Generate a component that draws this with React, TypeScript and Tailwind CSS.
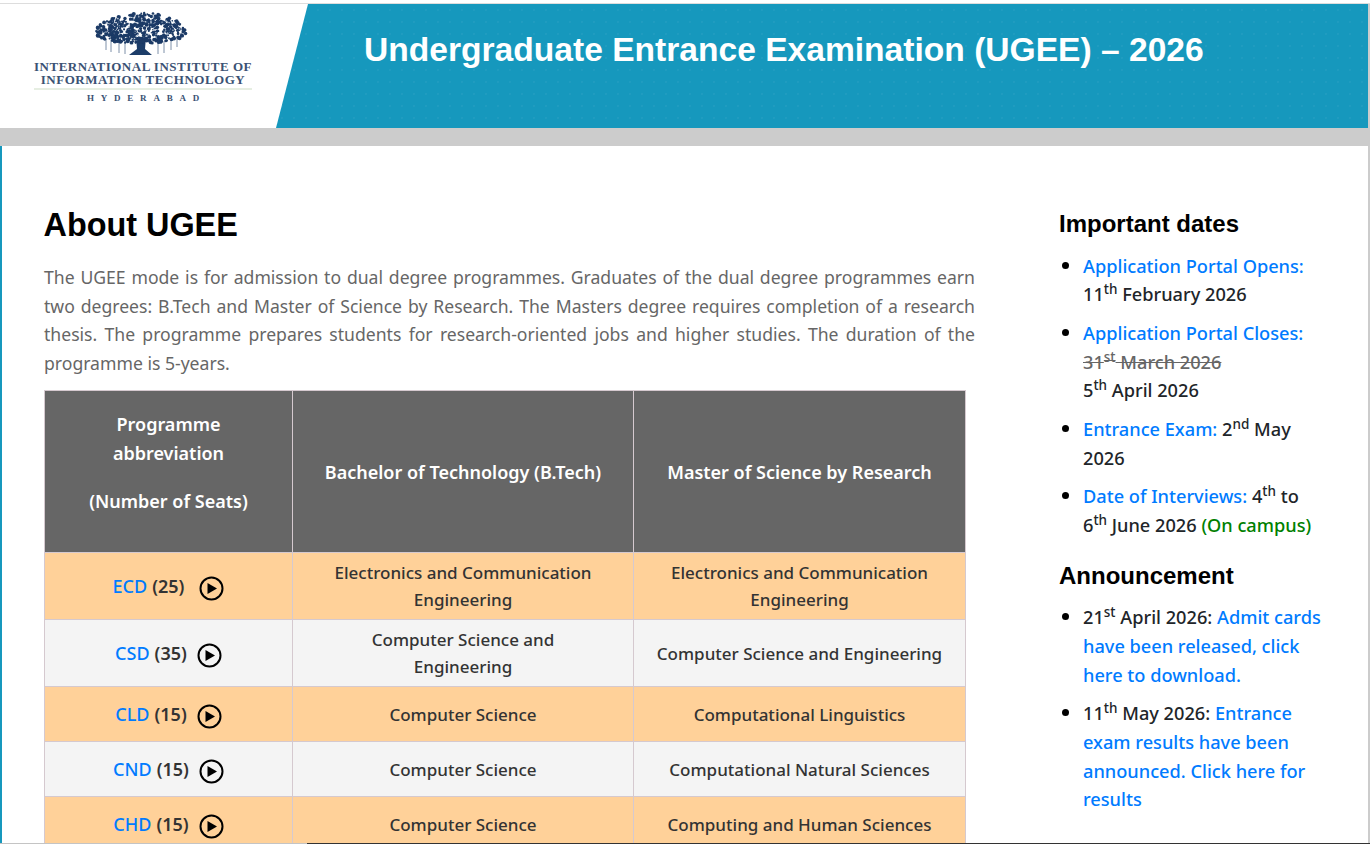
const body = "font-['Noto_Sans','Open_Sans',sans-serif]";

function Play() {
  return (
    <svg width="25" height="25" viewBox="0 0 25 25" className="block">
      <circle cx="12.5" cy="12.5" r="11" fill="none" stroke="#000" strokeWidth="2" />
      <path d="M8.500 7 L18 12.500 L8.500 18 Z" fill="#000" />
    </svg>
  );
}

function rnd(i: number) {
  const x = Math.sin(i * 12.9898) * 43758.5453;
  return x - Math.floor(x);
}

const leaves = Array.from({ length: 420 }, (_, i) => {
  const a = rnd(i + 1) * Math.PI * 2;
  const d = Math.sqrt(rnd(i + 500));
  const cx = 53 + Math.cos(a) * d * 45;
  const top = Math.sin(a) < 0 ? 17 : 14;
  const cy = 24 + Math.sin(a) * d * top + Math.abs(Math.cos(a) * d) * 3;
  return { cx, cy, r: 0.7 + rnd(i + 900) * 1.5 };
});
const specks = Array.from({ length: 60 }, (_, i) => {
  const a = rnd(i + 2000) * Math.PI * 2;
  const d = Math.sqrt(rnd(i + 2500));
  return { cx: 53 + Math.cos(a) * d * 40, cy: 24 + Math.sin(a) * d * 13, r: 0.3 + rnd(i + 2900) * 0.6 };
});

function Tree() {
  return (
    <svg width="110" height="52" viewBox="0 0 110 52" className="block">
      <defs>
        <filter id="soft" x="-5%" y="-5%" width="110%" height="110%">
          <feGaussianBlur stdDeviation="0.55" />
        </filter>
      </defs>
      <g filter="url(#soft)">
        <path d="M48 32 L58 32 L57 44 L64 50 L41 50 L49 44 Z" fill="#1d3d69" />
        <path d="M18 34 v11 M23 35 v12 M31 36 v12 M37 36 v13 M70 36 v13 M76 36 v12 M83 35 v10 M89 34 v8" stroke="#7e90a9" strokeWidth="1" fill="none" />
        {leaves.map((l, i) => (
          <circle key={i} cx={l.cx} cy={l.cy} r={l.r} fill="#1b3a66" />
        ))}
        {specks.map((l, i) => (
          <circle key={i} cx={l.cx} cy={l.cy} r={l.r} fill="#b9c5d4" />
        ))}
      </g>
    </svg>
  );
}

function Logo() {
  return (
    <div className="w-[276px] shrink-0 bg-white flex flex-col items-center pt-[1px] pl-[10px]">
      <Tree />
      <div className="font-['Liberation_Serif',serif] font-bold text-[#3b5274] text-[13px] leading-[12.5px] text-center mt-[4px] whitespace-nowrap">
        <div className="tracking-[0.5px]">INTERNATIONAL INSTITUTE OF</div>
        <div className="tracking-[0.5px]">INFORMATION TECHNOLOGY</div>
      </div>
      <div className="w-[218px] h-[2px] bg-[#e6eee2] mt-[2px]" />
      <div className="font-['Liberation_Serif',serif] font-bold text-[#3b5274] text-[9px] leading-[8px] tracking-[6.8px] mt-[4px] pl-[7px]">HYDERABAD</div>
    </div>
  );
}

const rows = [
  { a: "ECD", n: "(25)", gap: "ml-[15px]", b: ["Electronics and Communication", "Engineering"], c: ["Electronics and Communication", "Engineering"], h: "h-[67px]", bg: "bg-[#ffd199]" },
  { a: "CSD", n: "(35)", gap: "ml-[10px]", b: ["Computer Science and", "Engineering"], c: ["Computer Science and Engineering"], h: "h-[67px]", bg: "bg-[#f4f4f4]" },
  { a: "CLD", n: "(15)", gap: "ml-[10px]", b: ["Computer Science"], c: ["Computational Linguistics"], h: "h-[55px]", bg: "bg-[#ffd199]" },
  { a: "CND", n: "(15)", gap: "ml-[10px]", b: ["Computer Science"], c: ["Computational Natural Sciences"], h: "h-[55px]", bg: "bg-[#f4f4f4]" },
  { a: "CHD", n: "(15)", gap: "ml-[10px]", b: ["Computer Science"], c: ["Computing and Human Sciences"], h: "h-[55px]", bg: "bg-[#ffd199]" },
];

const cell = "border border-[#d5c9cf] text-center align-middle p-0";

function Lines({ l }: { l: string[] }) {
  return (
    <>
      {l.map((t) => (
        <div key={t} className="leading-[27px]">{t}</div>
      ))}
    </>
  );
}

const sup = "text-[13.5px] leading-[0] relative -top-[7px] align-baseline";
const link = "text-[#007bff]";
const list = `pl-[24px] text-[18.2px] leading-[28.8px] font-medium text-[#212529] ${body}`;
const item = "relative before:content-[''] before:absolute before:left-[-21.5px] before:top-[10.5px] before:w-[7px] before:h-[7px] before:rounded-full before:bg-black";

function Sidebar() {
  return (
    <div className="w-[267px] ml-[84px] pt-[64px] shrink-0">
      <h2 className="font-['Liberation_Sans',sans-serif] font-bold text-[24px] leading-[29px] text-black mb-[13.6px] mt-[-1px]">Important dates</h2>
      <ul className={list}>
        <li className={`${item} mb-[9.6px]`}><span className={link}>Application Portal Opens:</span><br />11<sup className={sup}>th</sup> February 2026</li>
        <li className={`${item} mb-[9.6px]`}><span className={link}>Application Portal Closes:</span><br /><span className="line-through text-[#666]">31<sup className={sup}>st</sup> March 2026</span><br />5<sup className={sup}>th</sup> April 2026</li>
        <li className={`${item} mb-[9.6px]`}><span className={link}>Entrance Exam:</span> 2<sup className={sup}>nd</sup> May 2026</li>
        <li className={item}><span className={link}>Date of Interviews:</span> 4<sup className={sup}>th</sup> to 6<sup className={sup}>th</sup> June 2026 <span className="text-[#008000]">(On campus)</span></li>
      </ul>
      <h2 className="font-['Liberation_Sans',sans-serif] font-bold text-[24px] leading-[29px] text-black mt-[21px] mb-[13.4px]">Announcement</h2>
      <ul className={list}>
        <li className={`${item} mb-[9.6px]`}>21<sup className={sup}>st</sup> April 2026: <span className={link}>Admit cards have been released, click here to download.</span></li>
        <li className={item}>11<sup className={sup}>th</sup> May 2026: <span className={link}>Entrance exam results have been announced. Click here for results</span></li>
      </ul>
    </div>
  );
}

export default function App() {
  return (
    <div className="h-[844px] w-[1370px] overflow-hidden bg-white flex flex-col border-t-[3px] border-t-white">
      <div className="h-px bg-[#dddddd] shrink-0" />
      <div className="flex h-[124px] shrink-0 pr-[2px] bg-[#cccccc]">
        <Logo />
        <div className="flex-1 bg-white">
          <div className="h-full bg-[#1698bd] bg-[radial-gradient(circle,rgba(255,255,255,0.045)_0.7px,transparent_1px)] bg-[length:12px_12px] [clip-path:polygon(32px_0,100%_0,100%_100%,0_100%)] pl-[88px]">
            <h1 className="font-['Liberation_Sans',sans-serif] font-bold text-white text-[33.6px] leading-[40px] pt-[26px] whitespace-nowrap">Undergraduate Entrance Examination (UGEE) – 2026</h1>
          </div>
        </div>
      </div>
      <div className="h-[18px] bg-[#cccccc] shrink-0" />
      <div className="flex-1 min-h-0 flex border-l-2 border-l-[#1698bd] border-r-2 border-r-[#cccccc] overflow-hidden">
        <div className="w-[973px] shrink-0 pl-[42px] pt-[60px]">
          <h1 className="font-['Liberation_Sans',sans-serif] font-bold text-[32.4px] leading-[38px] text-black -ml-[0.5px]">About UGEE</h1>
          <p className={`${body} text-[17.6px] leading-[28.8px] text-[#666] text-justify mt-[18.8px] w-[931px]`}>
            The UGEE mode is for admission to dual degree programmes. Graduates of the dual degree programmes earn two degrees: B.Tech and Master of Science by Research. The Masters degree requires completion of a research thesis. The programme prepares students for research-oriented jobs and higher studies. The duration of the programme is 5-years.
          </p>
          <table className={`${body} border-collapse w-[922px] table-fixed mt-[12.2px] text-[17px] font-medium text-[#333]`}>
            <thead>
              <tr className="h-[162px] bg-[#666] text-white text-[18px]">
                <th className={`${cell} w-[248px] font-semibold pb-[18px]`}>
                  <div className="leading-[29px]">Programme</div>
                  <div className="leading-[29px]">abbreviation</div>
                  <div className="leading-[29px] mt-[19px]">(Number of Seats)</div>
                </th>
                <th className={`${cell} w-[341px] font-semibold pt-[2px]`}>Bachelor of Technology (B.Tech)</th>
                <th className={`${cell} font-semibold pt-[2px]`}>Master of Science by Research</th>
              </tr>
            </thead>
            <tbody>
              {rows.map((r) => (
                <tr key={r.a} className={`${r.h} ${r.bg}`}>
                  <td className={`${cell} text-[18px]`}>
                    <span className="inline-flex items-center">
                      <span className="text-[#007bff]">{r.a}</span>
                      <span className="font-semibold ml-[5px]">{r.n}</span>
                      <span className={`${r.gap} relative top-[2px]`}><Play /></span>
                    </span>
                  </td>
                  <td className={cell}><Lines l={r.b} /></td>
                  <td className={cell}><Lines l={r.c} /></td>
                </tr>
              ))}
            </tbody>
          </table>
        </div>
        <Sidebar />
      </div>
      <div className="flex h-px shrink-0">
        <div className="w-[307px] bg-[#c4c4c4]" />
        <div className="flex-1 bg-[#333]" />
      </div>
    </div>
  );
}
